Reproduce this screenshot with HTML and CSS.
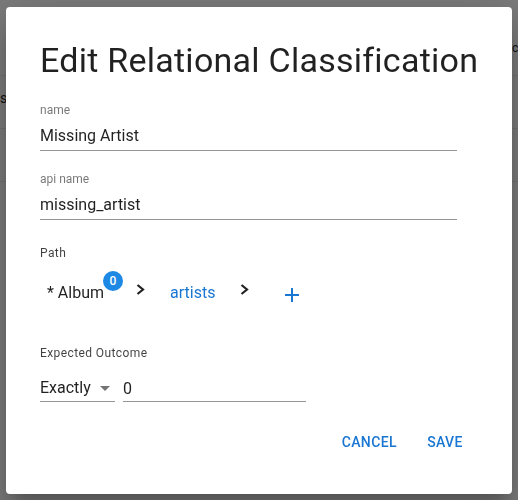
FILE: index.html
```html
<!DOCTYPE html>
<html lang="en">
<head>
<meta charset="utf-8">
<title>Edit Relational Classification</title>
<link rel="stylesheet" href="styles.css">
</head>
<body>
<div class="page">
  <div class="page-head"><span class="head-text">c</span></div>
  <div class="page-row"><span class="row-text">s</span></div>
  <div class="page-row"></div>
</div>
<div class="backdrop">
  <div class="dialog" role="dialog">
    <h2 class="title">Edit Relational Classification</h2>
    <div class="field field-first">
      <label class="field-label" for="name">name</label>
      <input class="field-input" id="name" value="Missing Artist">
    </div>
    <div class="field">
      <label class="field-label" for="api">api name</label>
      <input class="field-input" id="api" value="missing_artist">
    </div>
    <div class="section-label section-path">Path</div>
    <div class="path-row">
      <span class="path-root">* Album<span class="badge">0</span></span>
      <svg class="chevron" width="9" height="11" viewBox="0 0 9 11"><polyline points="1.5,1 7,5.5 1.5,10" fill="none" stroke="#212121" stroke-width="2.2"/></svg>
      <span class="path-link">artists</span>
      <svg class="chevron chevron-2" width="9" height="11" viewBox="0 0 9 11"><polyline points="1.5,1 7,5.5 1.5,10" fill="none" stroke="#212121" stroke-width="2.2"/></svg>
      <svg class="add" width="24" height="24" viewBox="0 0 24 24"><path d="M19 13h-6v6h-2v-6H5v-2h6V5h2v6h6v2z" fill="#1976d2"/></svg>
    </div>
    <div class="section-label section-outcome">Expected Outcome</div>
    <div class="outcome-row">
      <div class="select">
        <span>Exactly</span>
        <svg class="select-arrow" width="24" height="24" viewBox="0 0 24 24"><path d="M7 10l5 5 5-5z" fill="#757575"/></svg>
      </div>
      <input class="count-input" value="0">
    </div>
    <div class="actions">
      <button class="btn">Cancel</button>
      <button class="btn">Save</button>
    </div>
  </div>
</div>
</body>
</html>
```
FILE: styles.css
```css
* { box-sizing: border-box; }

body {
  margin: 0;
  font-family: Roboto, "Liberation Sans", Arial, sans-serif;
  overflow: hidden;
  background: #f5f5f5;
}

.page {
  height: 500px;
  background: #f5f5f5;
  color: #212121;
  font-size: 14px;
  white-space: nowrap;
  overflow: hidden;
}

.page-head {
  height: 76px;
  border-bottom: 1px solid #e0e0e0;
  padding: 38px 0 0 512px;
  line-height: 20px;
  font-size: 12px;
}

.page-row {
  height: 53px;
  border-bottom: 1px solid #e0e0e0;
  padding-top: 12px;
  line-height: 20px;
}

.backdrop {
  position: fixed;
  inset: 0;
  background: rgba(0, 0, 0, 0.5);
  padding: 7px 6px;
}

.dialog {
  width: 506px;
  height: 487px;
  background: #fff;
  border-radius: 4px;
  padding: 33px 35px 0 34px;
  box-shadow: 0 11px 15px -7px rgba(0,0,0,0.2), 0 24px 38px 3px rgba(0,0,0,0.14), 0 9px 46px 8px rgba(0,0,0,0.12);
  color: rgba(0, 0, 0, 0.87);
}

.title {
  margin: 0;
  font-size: 34px;
  line-height: 40px;
  font-weight: 400;
  letter-spacing: 0.25px;
  white-space: nowrap;
  color: rgba(0, 0, 0, 0.87);
}

.field {
  width: 417px;
  margin-top: 20px;
  display: flex;
  flex-direction: column;
}

.field-first { margin-top: 22px; }

.field-label {
  font-size: 12px;
  line-height: 16px;
  color: rgba(0, 0, 0, 0.54);
  margin-bottom: 5px;
}

.field-input,
.count-input {
  font: inherit;
  font-size: 16px;
  line-height: 24px;
  height: 28px;
  padding: 0 0 3px;
  border: none;
  border-bottom: 1px solid rgba(0, 0, 0, 0.42);
  color: rgba(0, 0, 0, 0.87);
  background: transparent;
  outline: none;
}

.section-label {
  font-size: 12px;
  line-height: 16px;
  letter-spacing: 0.4px;
  color: rgba(0, 0, 0, 0.75);
}

.section-path { margin-top: 25px; }

.path-row {
  display: flex;
  align-items: center;
  height: 40px;
  margin-top: 12px;
  font-size: 16px;
  line-height: 24px;
}

.path-root {
  position: relative;
  margin-left: 7px;
  color: rgba(0, 0, 0, 0.87);
}

.badge {
  position: absolute;
  top: -10px;
  right: -19px;
  width: 20px;
  height: 20px;
  border-radius: 50%;
  background: #1e88e5;
  color: #fff;
  font-size: 12px;
  font-weight: 500;
  line-height: 20px;
  text-align: center;
}

.chevron {
  margin-left: 32px;
  margin-bottom: 8px;
}

.path-link {
  margin-left: 25px;
  color: #1976d2;
}

.chevron-2 { margin-left: 25px; }

.add {
  margin-left: 31px;
  margin-top: 4px;
}

.section-outcome { margin-top: 32px; }

.outcome-row {
  display: flex;
  gap: 8px;
  margin-top: 15px;
}

.select {
  width: 75px;
  display: flex;
  align-items: center;
  justify-content: space-between;
  font-size: 16px;
  line-height: 24px;
  padding-bottom: 1px;
  border-bottom: 1px solid rgba(0, 0, 0, 0.42);
  color: rgba(0, 0, 0, 0.87);
}

.select-arrow { margin-right: -2px; }

.count-input {
  width: 183px;
  height: 26px;
  padding: 0 0 1px;
}

.actions {
  display: flex;
  justify-content: flex-end;
  gap: 8px;
  margin-top: 22px;
}

.btn {
  font-family: inherit;
  font-size: 14px;
  font-weight: 500;
  line-height: 24.5px;
  letter-spacing: 0.4px;
  text-transform: uppercase;
  color: #1976d2;
  background: none;
  border: none;
  padding: 6px 8px;
  min-width: 64px;
  text-align: center;
  border-radius: 4px;
}
```
